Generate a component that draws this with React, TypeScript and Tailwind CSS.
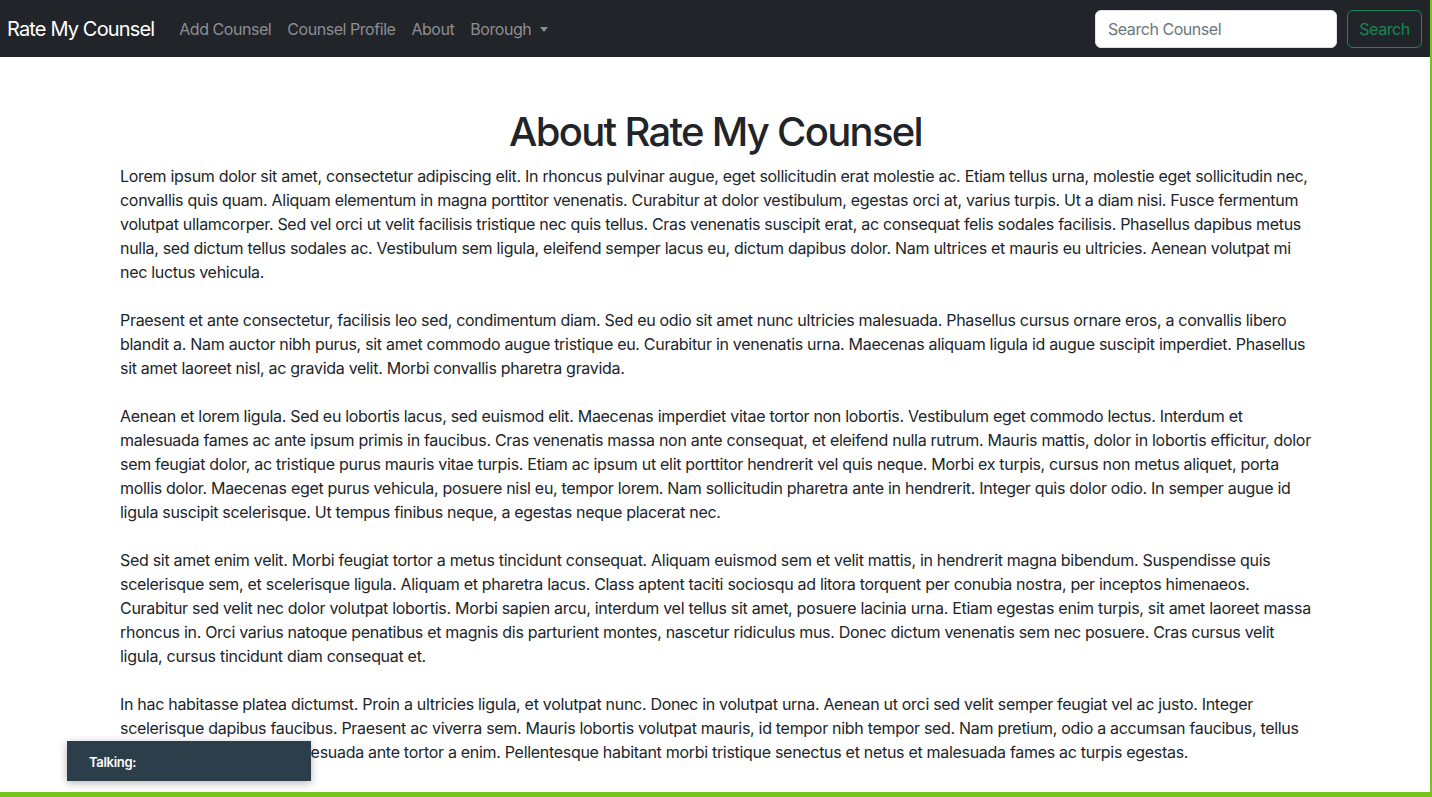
const paragraphs = [
  [
    "Lorem ipsum dolor sit amet, consectetur adipiscing elit. In rhoncus pulvinar augue, eget sollicitudin erat molestie ac. Etiam tellus urna, molestie eget sollicitudin nec,",
    "convallis quis quam. Aliquam elementum in magna porttitor venenatis. Curabitur at dolor vestibulum, egestas orci at, varius turpis. Ut a diam nisi. Fusce fermentum",
    "volutpat ullamcorper. Sed vel orci ut velit facilisis tristique nec quis tellus. Cras venenatis suscipit erat, ac consequat felis sodales facilisis. Phasellus dapibus metus",
    "nulla, sed dictum tellus sodales ac. Vestibulum sem ligula, eleifend semper lacus eu, dictum dapibus dolor. Nam ultrices et mauris eu ultricies. Aenean volutpat mi",
    "nec luctus vehicula.",
  ],
  [
    "Praesent et ante consectetur, facilisis leo sed, condimentum diam. Sed eu odio sit amet nunc ultricies malesuada. Phasellus cursus ornare eros, a convallis libero",
    "blandit a. Nam auctor nibh purus, sit amet commodo augue tristique eu. Curabitur in venenatis urna. Maecenas aliquam ligula id augue suscipit imperdiet. Phasellus",
    "sit amet laoreet nisl, ac gravida velit. Morbi convallis pharetra gravida.",
  ],
  [
    "Aenean et lorem ligula. Sed eu lobortis lacus, sed euismod elit. Maecenas imperdiet vitae tortor non lobortis. Vestibulum eget commodo lectus. Interdum et",
    "malesuada fames ac ante ipsum primis in faucibus. Cras venenatis massa non ante consequat, et eleifend nulla rutrum. Mauris mattis, dolor in lobortis efficitur, dolor",
    "sem feugiat dolor, ac tristique purus mauris vitae turpis. Etiam ac ipsum ut elit porttitor hendrerit vel quis neque. Morbi ex turpis, cursus non metus aliquet, porta",
    "mollis dolor. Maecenas eget purus vehicula, posuere nisl eu, tempor lorem. Nam sollicitudin pharetra ante in hendrerit. Integer quis dolor odio. In semper augue id",
    "ligula suscipit scelerisque. Ut tempus finibus neque, a egestas neque placerat nec.",
  ],
  [
    "Sed sit amet enim velit. Morbi feugiat tortor a metus tincidunt consequat. Aliquam euismod sem et velit mattis, in hendrerit magna bibendum. Suspendisse quis",
    "scelerisque sem, et scelerisque ligula. Aliquam et pharetra lacus. Class aptent taciti sociosqu ad litora torquent per conubia nostra, per inceptos himenaeos.",
    "Curabitur sed velit nec dolor volutpat lobortis. Morbi sapien arcu, interdum vel tellus sit amet, posuere lacinia urna. Etiam egestas enim turpis, sit amet laoreet massa",
    "rhoncus in. Orci varius natoque penatibus et magnis dis parturient montes, nascetur ridiculus mus. Donec dictum venenatis sem nec posuere. Cras cursus velit",
    "ligula, cursus tincidunt diam consequat et.",
  ],
  [
    "In hac habitasse platea dictumst. Proin a ultricies ligula, et volutpat nunc. Donec in volutpat urna. Aenean ut orci sed velit semper feugiat vel ac justo. Integer",
    "scelerisque dapibus faucibus. Praesent ac viverra sem. Mauris lobortis volutpat mauris, id tempor nibh tempor sed. Nam pretium, odio a accumsan faucibus, tellus",
    "nisl commodo nisi, vel malesuada ante tortor a enim. Pellentesque habitant morbi tristique senectus et netus et malesuada fames ac turpis egestas.",
  ],
];

const links = ["Add Counsel", "Counsel Profile", "About"];

function Navbar() {
  return (
    <nav className="flex h-[57px] shrink-0 items-center bg-[#212529] pl-[7px] pr-[8px]">
      <a className="mr-[25px] text-[20px] leading-[30px] tracking-[-0.85px] text-white">Rate My Counsel</a>
      <ul className="flex items-center gap-[16px]">
        {links.map((l) => (
          <li key={l}>
            <a className="block py-2 text-[16px] leading-6 tracking-[-0.45px] text-[#8c8e91]">{l}</a>
          </li>
        ))}
        <li>
          <a className="flex items-center py-2 text-[16px] leading-6 tracking-[-0.45px] text-[#8c8e91]">
            Borough
            <span className="ml-[9px] mt-[1px] h-0 w-0 border-x-[4.5px] border-t-[5px] border-x-transparent border-t-[#8c8e91]" />
          </a>
        </li>
      </ul>
      <form className="ml-auto flex items-center gap-[10px]">
        <input
          className="h-[38px] w-[242px] rounded-[6px] border border-[#dee2e6] bg-white px-3 text-[16px] tracking-[-0.45px] text-[#212529] outline-none placeholder:text-[#6c757d]"
          placeholder="Search Counsel"
        />
        <button
          type="button"
          className="h-[38px] w-[75px] rounded-[6px] border border-[#198754] text-[16px] tracking-[-0.45px] text-[#198754]"
        >
          Search
        </button>
      </form>
    </nav>
  );
}

export default function App() {
  return (
    <div
      className="relative flex h-[797px] w-full flex-col overflow-hidden border-b-[5px] border-r-2 border-[#78c41f] bg-white text-[#212529]"
      style={{ fontFamily: "Inter, 'Noto Sans', sans-serif" }}
    >
      <Navbar />
      <main className="mx-auto w-[1192px] pl-px pt-[51px]">
        <h1 className="mb-2 text-center text-[40px] font-medium leading-[48px] tracking-[-1.7px]">About Rate My Counsel</h1>
        {paragraphs.map((lines, i) => (
          <p key={i} className="mb-6 text-[16px] leading-6 tracking-[-0.3px]">
            {lines.map((line, j) => (
              <span key={j} className="block whitespace-nowrap">
                {line}
              </span>
            ))}
          </p>
        ))}
      </main>

      {/* speech status */}
      <div className="absolute left-[67px] top-[741px] flex h-[40px] w-[244px] items-center bg-[#2c3e4a] pl-[22px] pt-[4px] shadow-[0_2px_8px_rgba(0,0,0,0.3)]">
        <span className="text-[13px] font-semibold tracking-[-0.3px] text-white">Talking:</span>
      </div>
    </div>
  );
}
